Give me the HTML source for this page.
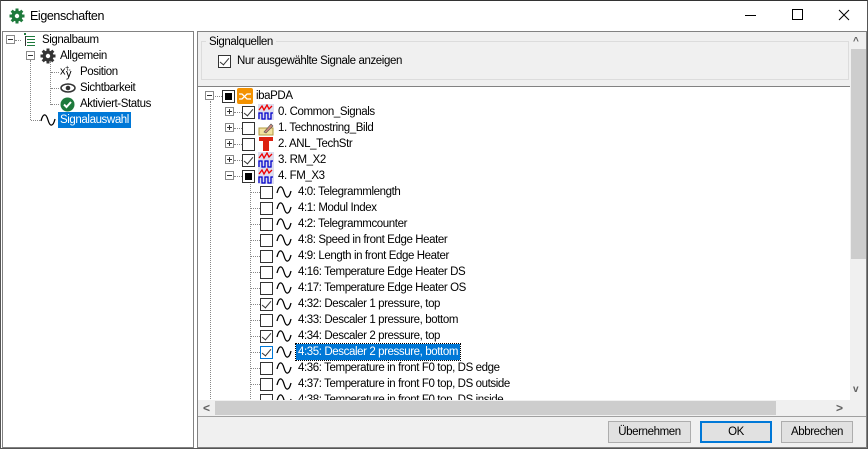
<!DOCTYPE html>
<html><head><meta charset="utf-8"><style>
*{margin:0;padding:0;box-sizing:border-box}
body{width:868px;height:449px;overflow:hidden;background:#fff;font-family:"Liberation Sans",sans-serif;font-size:11.5px;letter-spacing:-0.4px;color:#000;position:relative}
.a{position:absolute}
.t{position:absolute;height:16px;line-height:16px;white-space:nowrap}
.cb{position:absolute;width:13px;height:13px;border:1px solid #333;background:#fff}
.cb.c::after{content:"";position:absolute;left:3px;top:0px;width:4px;height:8px;border:solid #333;border-width:0 1.5px 1.5px 0;transform:rotate(40deg)}
.cb.f::after{content:"";position:absolute;left:2px;top:2px;width:7px;height:7px;background:#000}
.ex{position:absolute;width:9px;height:9px;border:1px solid #8a8a8a;background:#fff}
.ex::before{content:"";position:absolute;left:1px;top:3px;width:5px;height:1px;background:#333}
.ex.p::after{content:"";position:absolute;left:3px;top:1px;width:1px;height:5px;background:#333}
.hd{position:absolute;height:0;border-top:1px dotted #888}
.vd{position:absolute;width:0;border-left:1px dotted #888}
.btn{position:absolute;height:22px;border:1px solid #adadad;background:#e1e1e1;text-align:center;line-height:20px}
</style></head><body>
<div class="a" style="left:0;top:0;width:868px;height:449px;border:1px solid #555;border-top:1px solid #333"></div>
<svg class="a" style="left:9px;top:8px" width="16" height="16" viewBox="0 0 16 16"><g fill="#1e7a3c"><circle cx="8" cy="8" r="5.5"/><g><rect x="6.5" y="0.5" width="3" height="15"/><rect x="0.5" y="6.5" width="15" height="3"/></g><g transform="rotate(45 8 8)"><rect x="6.5" y="0.5" width="3" height="15"/><rect x="0.5" y="6.5" width="15" height="3"/></g></g><circle cx="8" cy="8" r="2.2" fill="#fff"/></svg>
<div class="t" style="left:30px;top:8px;font-size:12.5px">Eigenschaften</div>
<div class="a" style="left:745px;top:15px;width:11px;height:1px;background:#000"></div>
<div class="a" style="left:792px;top:9px;width:11px;height:11px;border:1px solid #000"></div>
<svg class="a" style="left:838px;top:9px" width="12" height="12"><path d="M1 1L11 11M11 1L1 11" stroke="#000" stroke-width="1"/></svg>
<div class="a" style="left:2px;top:31px;width:192px;height:417px;border:1px solid #828282;background:#fff"></div>
<div class="ex" style="left:6px;top:35px"></div>
<div class="hd" style="left:15px;top:40px;width:6px"></div>
<svg class="a" style="left:22px;top:33px" width="14" height="14"><g fill="#1e7a3c"><rect x="2" y="0" width="2" height="2"/><rect x="4" y="3" width="9" height="1"/><rect x="5" y="6" width="8" height="1"/><rect x="5" y="9" width="8" height="1"/><rect x="5" y="12" width="8" height="1"/></g><g fill="#333"><rect x="3" y="3" width="1" height="10"/></g></svg>
<div class="t" style="left:42px;top:32px">Signalbaum</div>
<div class="ex" style="left:26px;top:51px"></div>
<div class="vd" style="left:50px;top:61px;height:44px"></div>
<svg class="a" style="left:40px;top:48px" width="16" height="16" viewBox="0 0 16 16"><g fill="#333"><circle cx="8" cy="8" r="5.5"/><g><rect x="6.5" y="0.5" width="3" height="15"/><rect x="0.5" y="6.5" width="15" height="3"/></g><g transform="rotate(45 8 8)"><rect x="6.5" y="0.5" width="3" height="15"/><rect x="0.5" y="6.5" width="15" height="3"/></g></g><circle cx="8" cy="8" r="2.2" fill="#fff"/></svg>
<div class="t" style="left:60px;top:48px">Allgemein</div>
<div class="hd" style="left:51px;top:72px;width:8px"></div>
<div class="t" style="left:60px;top:63px;font-size:11px;line-height:12px">x<sup style="font-size:7px">+</sup></div>
<div class="t" style="left:66px;top:68px;font-size:11px;line-height:12px">ÿ</div>
<div class="t" style="left:80px;top:64px">Position</div>
<div class="hd" style="left:51px;top:88px;width:8px"></div>
<svg class="a" style="left:60px;top:82px" width="16" height="12"><ellipse cx="8" cy="6" rx="7" ry="4" fill="none" stroke="#333" stroke-width="1.5"/><circle cx="8" cy="6" r="2.3" fill="#333"/></svg>
<div class="t" style="left:80px;top:80px">Sichtbarkeit</div>
<div class="hd" style="left:51px;top:104px;width:8px"></div>
<svg class="a" style="left:60px;top:97px" width="15" height="15"><circle cx="7.5" cy="7.5" r="7" fill="#1e7a3c"/><path d="M4 7.5l2.5 2.5 4.5-5" stroke="#fff" stroke-width="2" fill="none"/></svg>
<div class="t" style="left:80px;top:96px">Aktiviert-Status</div>
<div class="vd" style="left:30px;top:60px;height:60px"></div>
<div class="vd" style="left:11px;top:45px;height:0px"></div>
<div class="hd" style="left:31px;top:120px;width:9px"></div>
<svg class="a" style="left:40px;top:113px" width="16" height="14"><path d="M1 8C3 0 6 0 8 7S13 14 15 6" stroke="#000" fill="none" stroke-width="1.3"/></svg>
<div class="t" style="left:58px;top:112px;background:#0078d7;color:#fff;padding:0 2px">Signalauswahl</div>
<div class="a" style="left:197px;top:31px;width:670px;height:417px;border:1px solid #828282;background:#f0f0f0"></div>
<div class="a" style="left:201px;top:41px;width:648px;height:39px;border:1px solid #dcdcdc"></div>
<div class="t" style="left:206px;top:34px;background:#f0f0f0;padding:0 3px">Signalquellen</div>
<div class="cb c" style="left:218px;top:55px"></div>
<div class="t" style="left:237px;top:53px">Nur ausgewählte Signale anzeigen</div>
<div class="a" style="left:198px;top:86px;width:652px;height:1px;background:#828282"></div>
<div class="a" style="left:198px;top:87px;width:652px;height:313px;background:#fff"></div>
<div class="a" style="left:850px;top:32px;width:16px;height:384px;background:#f0f0f0"></div>
<div class="a" style="left:851px;top:49px;width:15px;height:210px;background:#cdcdcd"></div>
<div class="t" style="left:853px;top:34px;font-size:10px;color:#606060;font-weight:bold">^</div>
<div class="t" style="left:853px;top:382px;font-size:10px;color:#606060;font-weight:bold">v</div>
<div class="a" style="left:198px;top:400px;width:652px;height:16px;background:#f0f0f0"></div>
<div class="a" style="left:215px;top:401px;width:561px;height:14px;background:#cdcdcd"></div>
<div class="t" style="left:203px;top:400px;font-size:12px;color:#606060;font-weight:bold">&lt;</div>
<div class="t" style="left:836px;top:400px;font-size:12px;color:#606060;font-weight:bold">&gt;</div>
<div class="a" style="left:198px;top:416px;width:668px;height:1px;background:#a0a0a0"></div>
<div class="btn" style="left:608px;top:421px;width:83px">Übernehmen</div>
<div class="btn" style="left:700px;top:421px;width:72px;border:2px solid #0078d7;line-height:18px">OK</div>
<div class="btn" style="left:781px;top:421px;width:72px">Abbrechen</div>
<div style="position:absolute;left:0;top:0;width:850px;height:400px;overflow:hidden;clip-path:inset(87px 0 0 199px)">
<div class="vd" style="left:210px;top:101px;height:300px"></div>
<div class="ex" style="left:205px;top:91px"></div>
<div class="hd" style="left:215px;top:96px;width:7px"></div>
<div class="cb f" style="left:222px;top:90px"></div>
<div class="a" style="left:237px;top:88px;width:16px;height:16px;background:#f39200;border-radius:2px"></div>
<svg class="a" style="left:237px;top:88px" width="16" height="16"><path d="M2 6h3l5 5h4M2 11h3l5-5h4" stroke="#fff" fill="none" stroke-width="1.3"/></svg>
<div class="t" style="left:256px;top:88px">ibaPDA</div>
<div class="vd" style="left:250px;top:181px;height:220px"></div>
<div class="ex p" style="left:225px;top:107px"></div><div class="hd" style="left:234px;top:112px;width:8px"></div><div class="cb c" style="left:242px;top:106px"></div>
<svg class="a" style="left:258px;top:104px" width="16" height="16"><rect width="16" height="16" fill="#dde"/><path d="M1 6l3-4 2 4 3-5 2 4 3-3" stroke="#e00" fill="none" stroke-width="1.3"/><path d="M1 15v-6h3v6h3v-6h3v6h3v-6h2" stroke="#00c" fill="none" stroke-width="1.3"/></svg>
<div class="t" style="left:278px;top:104px">0. Common_Signals</div>
<div class="ex p" style="left:225px;top:123px"></div><div class="hd" style="left:234px;top:128px;width:8px"></div><div class="cb" style="left:242px;top:122px"></div>
<svg class="a" style="left:258px;top:120px" width="16" height="16"><rect x="1" y="8" width="14" height="7" fill="#f2e2a0" stroke="#b09a40"/><path d="M6 12l7-8 2 2-7 7z" fill="#c87" stroke="#555" stroke-width=".6"/></svg>
<div class="t" style="left:278px;top:120px">1. Technostring_Bild</div>
<div class="ex p" style="left:225px;top:139px"></div><div class="hd" style="left:234px;top:144px;width:8px"></div><div class="cb" style="left:242px;top:138px"></div>
<svg class="a" style="left:258px;top:136px" width="16" height="16"><path d="M1 1h14v4h-4v10h-6v-10h-4z" fill="#d21"/></svg>
<div class="t" style="left:278px;top:136px">2. ANL_TechStr</div>
<div class="ex p" style="left:225px;top:155px"></div><div class="hd" style="left:234px;top:160px;width:8px"></div><div class="cb c" style="left:242px;top:154px"></div>
<svg class="a" style="left:258px;top:152px" width="16" height="16"><rect width="16" height="16" fill="#dde"/><path d="M1 6l3-4 2 4 3-5 2 4 3-3" stroke="#e00" fill="none" stroke-width="1.3"/><path d="M1 15v-6h3v6h3v-6h3v6h3v-6h2" stroke="#00c" fill="none" stroke-width="1.3"/></svg>
<div class="t" style="left:278px;top:152px">3. RM_X2</div>
<div class="ex" style="left:225px;top:171px"></div><div class="hd" style="left:234px;top:176px;width:8px"></div><div class="cb f" style="left:242px;top:170px"></div>
<svg class="a" style="left:258px;top:168px" width="16" height="16"><rect width="16" height="16" fill="#dde"/><path d="M1 6l3-4 2 4 3-5 2 4 3-3" stroke="#e00" fill="none" stroke-width="1.3"/><path d="M1 15v-6h3v6h3v-6h3v6h3v-6h2" stroke="#00c" fill="none" stroke-width="1.3"/></svg>
<div class="t" style="left:278px;top:168px">4. FM_X3</div>
<div class="hd" style="left:251px;top:192px;width:9px"></div><div class="cb" style="left:260px;top:186px"></div><svg class="a" style="left:276px;top:185px" width="16" height="14"><path d="M1 8C3 0 6 0 8 7S13 14 15 6" stroke="#000" fill="none" stroke-width="1.3"/></svg><div class="t" style="left:298px;top:184px">4:0: Telegrammlength</div>
<div class="hd" style="left:251px;top:208px;width:9px"></div><div class="cb" style="left:260px;top:202px"></div><svg class="a" style="left:276px;top:201px" width="16" height="14"><path d="M1 8C3 0 6 0 8 7S13 14 15 6" stroke="#000" fill="none" stroke-width="1.3"/></svg><div class="t" style="left:298px;top:200px">4:1: Modul Index</div>
<div class="hd" style="left:251px;top:224px;width:9px"></div><div class="cb" style="left:260px;top:218px"></div><svg class="a" style="left:276px;top:217px" width="16" height="14"><path d="M1 8C3 0 6 0 8 7S13 14 15 6" stroke="#000" fill="none" stroke-width="1.3"/></svg><div class="t" style="left:298px;top:216px">4:2: Telegrammcounter</div>
<div class="hd" style="left:251px;top:240px;width:9px"></div><div class="cb" style="left:260px;top:234px"></div><svg class="a" style="left:276px;top:233px" width="16" height="14"><path d="M1 8C3 0 6 0 8 7S13 14 15 6" stroke="#000" fill="none" stroke-width="1.3"/></svg><div class="t" style="left:298px;top:232px">4:8: Speed in front Edge Heater</div>
<div class="hd" style="left:251px;top:256px;width:9px"></div><div class="cb" style="left:260px;top:250px"></div><svg class="a" style="left:276px;top:249px" width="16" height="14"><path d="M1 8C3 0 6 0 8 7S13 14 15 6" stroke="#000" fill="none" stroke-width="1.3"/></svg><div class="t" style="left:298px;top:248px">4:9: Length in front Edge Heater</div>
<div class="hd" style="left:251px;top:272px;width:9px"></div><div class="cb" style="left:260px;top:266px"></div><svg class="a" style="left:276px;top:265px" width="16" height="14"><path d="M1 8C3 0 6 0 8 7S13 14 15 6" stroke="#000" fill="none" stroke-width="1.3"/></svg><div class="t" style="left:298px;top:264px">4:16: Temperature Edge Heater DS</div>
<div class="hd" style="left:251px;top:288px;width:9px"></div><div class="cb" style="left:260px;top:282px"></div><svg class="a" style="left:276px;top:281px" width="16" height="14"><path d="M1 8C3 0 6 0 8 7S13 14 15 6" stroke="#000" fill="none" stroke-width="1.3"/></svg><div class="t" style="left:298px;top:280px">4:17: Temperature Edge Heater OS</div>
<div class="hd" style="left:251px;top:304px;width:9px"></div><div class="cb c" style="left:260px;top:298px"></div><svg class="a" style="left:276px;top:297px" width="16" height="14"><path d="M1 8C3 0 6 0 8 7S13 14 15 6" stroke="#000" fill="none" stroke-width="1.3"/></svg><div class="t" style="left:298px;top:296px">4:32: Descaler 1 pressure, top</div>
<div class="hd" style="left:251px;top:320px;width:9px"></div><div class="cb" style="left:260px;top:314px"></div><svg class="a" style="left:276px;top:313px" width="16" height="14"><path d="M1 8C3 0 6 0 8 7S13 14 15 6" stroke="#000" fill="none" stroke-width="1.3"/></svg><div class="t" style="left:298px;top:312px">4:33: Descaler 1 pressure, bottom</div>
<div class="hd" style="left:251px;top:336px;width:9px"></div><div class="cb c" style="left:260px;top:330px"></div><svg class="a" style="left:276px;top:329px" width="16" height="14"><path d="M1 8C3 0 6 0 8 7S13 14 15 6" stroke="#000" fill="none" stroke-width="1.3"/></svg><div class="t" style="left:298px;top:328px">4:34: Descaler 2 pressure, top</div>
<div class="hd" style="left:251px;top:352px;width:9px"></div><div class="cb c" style="left:260px;top:346px;border-color:#0078d7"></div><svg class="a" style="left:276px;top:345px" width="16" height="14"><path d="M1 8C3 0 6 0 8 7S13 14 15 6" stroke="#000" fill="none" stroke-width="1.3"/></svg><div class="t" style="left:296px;top:344px;background:#0078d7;color:#fff;padding:0 2px;outline:1px dotted #000">4:35: Descaler 2 pressure, bottom</div>
<div class="hd" style="left:251px;top:368px;width:9px"></div><div class="cb" style="left:260px;top:362px"></div><svg class="a" style="left:276px;top:361px" width="16" height="14"><path d="M1 8C3 0 6 0 8 7S13 14 15 6" stroke="#000" fill="none" stroke-width="1.3"/></svg><div class="t" style="left:298px;top:360px">4:36: Temperature in front F0 top, DS edge</div>
<div class="hd" style="left:251px;top:384px;width:9px"></div><div class="cb" style="left:260px;top:378px"></div><svg class="a" style="left:276px;top:377px" width="16" height="14"><path d="M1 8C3 0 6 0 8 7S13 14 15 6" stroke="#000" fill="none" stroke-width="1.3"/></svg><div class="t" style="left:298px;top:376px">4:37: Temperature in front F0 top, DS outside</div>
<div class="hd" style="left:251px;top:400px;width:9px"></div><div class="cb" style="left:260px;top:394px"></div><svg class="a" style="left:276px;top:393px" width="16" height="14"><path d="M1 8C3 0 6 0 8 7S13 14 15 6" stroke="#000" fill="none" stroke-width="1.3"/></svg><div class="t" style="left:298px;top:392px">4:38: Temperature in front F0 top, DS inside</div>
</div>
</body></html>
